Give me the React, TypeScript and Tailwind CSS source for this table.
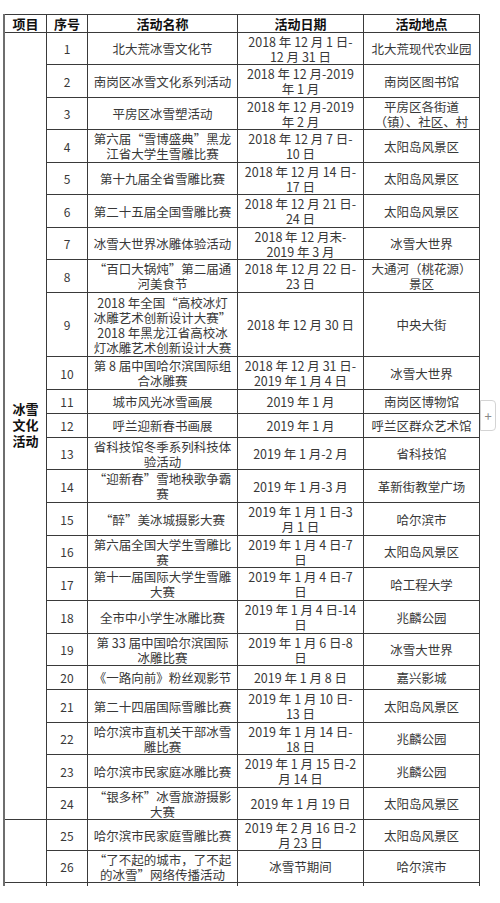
import React from "react";

type Row = { n: number; name: string[]; date: string[]; place: string[] };

const rows: Row[] = [
  { n: 1, name: ["北大荒冰雪文化节"], date: ["2018 年 12 月 1 日-", "12 月 31 日"], place: ["北大荒现代农业园"] },
  { n: 2, name: ["南岗区冰雪文化系列活动"], date: ["2018 年 12 月-2019", "年 1 月"], place: ["南岗区图书馆"] },
  { n: 3, name: ["平房区冰雪塑活动"], date: ["2018 年 12 月-2019", "年 2 月"], place: ["平房区各街道", "（镇）、社区、村"] },
  { n: 4, name: ["第六届“雪博盛典”黑龙", "江省大学生雪雕比赛"], date: ["2018 年 12 月 7 日-", "10 日"], place: ["太阳岛风景区"] },
  { n: 5, name: ["第十九届全省雪雕比赛"], date: ["2018 年 12 月 14 日-", "17 日"], place: ["太阳岛风景区"] },
  { n: 6, name: ["第二十五届全国雪雕比赛"], date: ["2018 年 12 月 21 日-", "24 日"], place: ["太阳岛风景区"] },
  { n: 7, name: ["冰雪大世界冰雕体验活动"], date: ["2018 年 12 月末-", "2019 年 3 月"], place: ["冰雪大世界"] },
  { n: 8, name: ["“百口大锅炖”第二届通", "河美食节"], date: ["2018 年 12 月 22 日-", "23 日"], place: ["大通河（桃花源）", "景区"] },
  {
    n: 9,
    name: ["2018 年全国“高校冰灯", "冰雕艺术创新设计大赛”", "2018 年黑龙江省高校冰", "灯冰雕艺术创新设计大赛"],
    date: ["2018 年 12 月 30 日"],
    place: ["中央大街"],
  },
  { n: 10, name: ["第 8 届中国哈尔滨国际组", "合冰雕赛"], date: ["2018 年 12 月 31 日-", "2019 年 1 月 4 日"], place: ["冰雪大世界"] },
  { n: 11, name: ["城市风光冰雪画展"], date: ["2019 年 1 月"], place: ["南岗区博物馆"] },
  { n: 12, name: ["呼兰迎新春书画展"], date: ["2019 年 1 月"], place: ["呼兰区群众艺术馆"] },
  { n: 13, name: ["省科技馆冬季系列科技体", "验活动"], date: ["2019 年 1 月-2 月"], place: ["省科技馆"] },
  { n: 14, name: ["“迎新春”雪地秧歌争霸", "赛"], date: ["2019 年 1 月-3 月"], place: ["革新街教堂广场"] },
  { n: 15, name: ["“醉”美冰城摄影大赛"], date: ["2019 年 1 月 1 日-3", "月 1 日"], place: ["哈尔滨市"] },
  { n: 16, name: ["第六届全国大学生雪雕比", "赛"], date: ["2019 年 1 月 4 日-7", "日"], place: ["太阳岛风景区"] },
  { n: 17, name: ["第十一届国际大学生雪雕", "大赛"], date: ["2019 年 1 月 4 日-7", "日"], place: ["哈工程大学"] },
  { n: 18, name: ["全市中小学生冰雕比赛"], date: ["2019 年 1 月 4 日-14", "日"], place: ["兆麟公园"] },
  { n: 19, name: ["第 33 届中国哈尔滨国际", "冰雕比赛"], date: ["2019 年 1 月 6 日-8", "日"], place: ["冰雪大世界"] },
  { n: 20, name: ["《一路向前》粉丝观影节"], date: ["2019 年 1 月 8 日"], place: ["嘉兴影城"] },
  { n: 21, name: ["第二十四届国际雪雕比赛"], date: ["2019 年 1 月 10 日-", "13 日"], place: ["太阳岛风景区"] },
  { n: 22, name: ["哈尔滨市直机关干部冰雪", "雕比赛"], date: ["2019 年 1 月 14 日-", "18 日"], place: ["兆麟公园"] },
  { n: 23, name: ["哈尔滨市民家庭冰雕比赛"], date: ["2019 年 1 月 15 日-2", "月 14 日"], place: ["兆麟公园"] },
  { n: 24, name: ["“银多杯”冰雪旅游摄影", "大赛"], date: ["2019 年 1 月 19 日"], place: ["太阳岛风景区"] },
  { n: 25, name: ["哈尔滨市民家庭雪雕比赛"], date: ["2019 年 2 月 16 日-2", "月 23 日"], place: ["太阳岛风景区"] },
  { n: 26, name: ["“了不起的城市，了不起", "的冰雪”网络传播活动"], date: ["冰雪节期间"], place: ["哈尔滨市"] },
];

const cell =
  "bg-white flex flex-col items-center justify-center text-center text-[12.5px] leading-[15px] text-[#383838] whitespace-nowrap";
const head =
  "bg-white flex items-center justify-center text-[13px] leading-[15px] font-bold text-[#111] whitespace-nowrap";

function Lines({ lines }: { lines: string[] }) {
  return (
    <>
      {lines.map((l, i) => (
        <span key={i} className="block">
          {l}
        </span>
      ))}
    </>
  );
}

export default function App() {
  return (
    <div
      className="relative w-[500px] h-[903px] bg-white overflow-hidden"
      style={{ fontFamily: '"Noto Sans CJK SC", "Noto Sans", sans-serif' }}
    >
      <div className="ml-[3px] mt-[14px] w-[477px] bg-[#3a3a3a] pt-px pr-px border-l-2 border-[#6e6e6e] grid gap-px grid-cols-[41px_40px_149px_125px_115px] grid-rows-[17px_31px_32px_31px_32px_31px_32px_31px_32px_63px_32px_23px_23px_31px_32px_32px_31px_32px_32px_31px_23px_32px_31px_32px_31px_30px_31px_3px]">
        <div className={head}>项目</div>
        <div className={head}>序号</div>
        <div className={head}>活动名称</div>
        <div className={head}>活动日期</div>
        <div className={head}>活动地点</div>

        {rows.map((r) => (
          <React.Fragment key={r.n}>
            {r.n === 1 && (
              <div className="row-span-24 bg-white flex flex-col items-center justify-center text-[13px] leading-[16px] font-bold text-[#111] pb-[2px]">
                <span>冰雪</span>
                <span>文化</span>
                <span>活动</span>
              </div>
            )}
            {r.n === 25 && <div className="row-span-2 bg-white" />}
            <div className={cell + " text-[12px]"}>{r.n}</div>
            <div className={cell}>
              <Lines lines={r.name} />
            </div>
            <div className={cell}>
              <Lines lines={r.date} />
            </div>
            <div className={cell}>
              <Lines lines={r.place} />
            </div>
          </React.Fragment>
        ))}

        <div className="bg-white" />
        <div className="bg-white" />
        <div className="bg-white" />
        <div className="bg-white" />
        <div className="bg-white" />
      </div>

      <div className="absolute left-[480px] top-[400px] w-[16px] h-[31px] bg-white border border-[#d4d4d4] rounded-r-[4px] flex items-center justify-center text-[13px] text-[#888] leading-none">
        +
      </div>
    </div>
  );
}
